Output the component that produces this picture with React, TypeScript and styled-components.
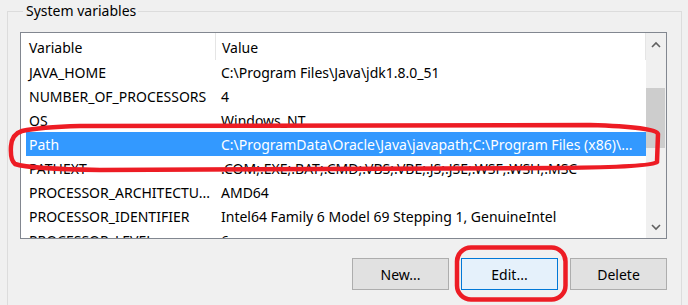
import React from 'react';
import styled, { createGlobalStyle } from 'styled-components';

const GlobalStyle = createGlobalStyle`
  html, body {
    margin: 0;
    padding: 0;
    background: #f0f0f0;
  }
  body {
    font-family: "Noto Sans", "Open Sans", sans-serif;
    font-size: 14px;
    color: #000;
  }
`;

const Screen = styled.div`
  position: relative;
  width: 688px;
  height: 305px;
  overflow: hidden;
  background: #f0f0f0;
`;

const GroupBox = styled.fieldset`
  margin: 3px 6px 0 7px;
  padding: 13px 14px 0 12px;
  height: 320px;
  border: 1px solid #dcdcdc;
  box-sizing: border-box;
`;

const Legend = styled.legend`
  padding: 0 2px 0 3px;
  margin-left: 3px;
  font-size: 14px;
  line-height: 16px;
`;

const ListBox = styled.div`
  display: flex;
  height: 207px;
  border: 1px solid #828790;
  background: #fff;
  box-sizing: border-box;
  overflow: hidden;
`;

const ListBody = styled.div`
  flex: 1;
  min-width: 0;
  overflow: hidden;
`;

const HeaderRow = styled.div`
  display: flex;
  height: 27px;
  align-items: center;
  margin-left: 5px;
  border-right: 1px solid #e5e5e5;
`;

const HeaderCell = styled.div<{ $w?: number }>`
  ${(p) => (p.$w ? `width: ${p.$w}px;` : 'flex: 1;')}
  height: 100%;
  display: flex;
  align-items: center;
  padding-left: ${(p) => (p.$w ? 3 : 6)}px;
  box-sizing: border-box;
  border-right: ${(p) => (p.$w ? '1px solid #e5e5e5' : 'none')};
  padding-top: 2px;
`;

const Row = styled.div<{ $selected?: boolean }>`
  display: flex;
  height: 24px;
  align-items: center;
  margin-left: 5px;
  background: ${(p) => (p.$selected ? '#3399ff' : 'transparent')};
  color: ${(p) => (p.$selected ? '#fff' : '#000')};
  white-space: nowrap;
`;

const Cell = styled.div<{ $w?: number }>`
  ${(p) => (p.$w ? `width: ${p.$w}px;` : 'flex: 1;')}
  padding-left: 3px;
  box-sizing: border-box;
  overflow: hidden;
  white-space: nowrap;
`;

const ScrollBar = styled.div`
  width: 20px;
  display: flex;
  flex-direction: column;
  background: #f0f0f0;
`;

const ArrowBtn = styled.div`
  height: 22px;
  display: flex;
  align-items: center;
  justify-content: center;
`;

const Track = styled.div`
  flex: 1;
  display: flex;
  flex-direction: column;
`;

const Thumb = styled.div`
  margin: 33px 1px 0 0;
  height: 60px;
  background: #cdcdcd;
`;

const ButtonRow = styled.div`
  display: flex;
  justify-content: flex-end;
  gap: 12px;
  margin-top: 19px;
`;

const Button = styled.button<{ $focused?: boolean }>`
  width: 97px;
  height: 32px;
  font-family: inherit;
  font-size: 14px;
  color: #000;
  background: ${(p) => (p.$focused ? '#e5f1fb' : '#e1e1e1')};
  border: 1px solid ${(p) => (p.$focused ? '#0078d7' : '#adadad')};
  padding: 0;
`;

const Markup = styled.svg`
  position: absolute;
  left: 0;
  top: 0;
  pointer-events: none;
`;

const rows: [string, string][] = [
  ['JAVA_HOME', 'C:\\Program Files\\Java\\jdk1.8.0_51'],
  ['NUMBER_OF_PROCESSORS', '4'],
  ['OS', 'Windows_NT'],
  ['Path', 'C:\\ProgramData\\Oracle\\Java\\javapath;C:\\Program Files (x86)\\...'],
  ['PATHEXT', '.COM;.EXE;.BAT;.CMD;.VBS;.VBE;.JS;.JSE;.WSF;.WSH;.MSC'],
  ['PROCESSOR_ARCHITECTU...', 'AMD64'],
  ['PROCESSOR_IDENTIFIER', 'Intel64 Family 6 Model 69 Stepping 1, GenuineIntel'],
  ['PROCESSOR_LEVEL', '6'],
];

const Chevron = ({ up }: { up?: boolean }) => (
  <svg width="10" height="7" viewBox="0 0 10 7">
    <path
      d={up ? 'M1 6 L5 2 L9 6' : 'M1 1 L5 5 L9 1'}
      fill="none"
      stroke="#606060"
      strokeWidth="1.6"
    />
  </svg>
);

export default function App() {
  return (
    <Screen>
      <GlobalStyle />
      <GroupBox>
        <Legend>System variables</Legend>
        <ListBox>
          <ListBody>
            <HeaderRow>
              <HeaderCell $w={190}>Variable</HeaderCell>
              <HeaderCell>Value</HeaderCell>
            </HeaderRow>
            {rows.map(([name, value]) => (
              <Row key={name} $selected={name === 'Path'}>
                <Cell $w={192}>{name}</Cell>
                <Cell>{value}</Cell>
              </Row>
            ))}
          </ListBody>
          <ScrollBar>
            <ArrowBtn>
              <Chevron up />
            </ArrowBtn>
            <Track>
              <Thumb />
            </Track>
            <ArrowBtn>
              <Chevron />
            </ArrowBtn>
          </ScrollBar>
        </ListBox>
        <ButtonRow>
          <Button>New...</Button>
          <Button $focused>Edit...</Button>
          <Button>Delete</Button>
        </ButtonRow>
      </GroupBox>
      <Markup width="688" height="305" viewBox="0 0 688 305">
        <path
          d="M80 126 L590 125 Q656 127 658 134 L657 162 Q652 167 560 168 L100 170 Q30 169 15 164 Q10 160 11 146 Q12 134 22 131 Q40 127 80 126 Z"
          fill="none"
          stroke="#ed1c24"
          strokeWidth="4.5"
        />
        <rect x="457" y="247.5" width="108.5" height="52" rx="14" fill="none" stroke="#ed1c24" strokeWidth="4.5" />
      </Markup>
    </Screen>
  );
}
